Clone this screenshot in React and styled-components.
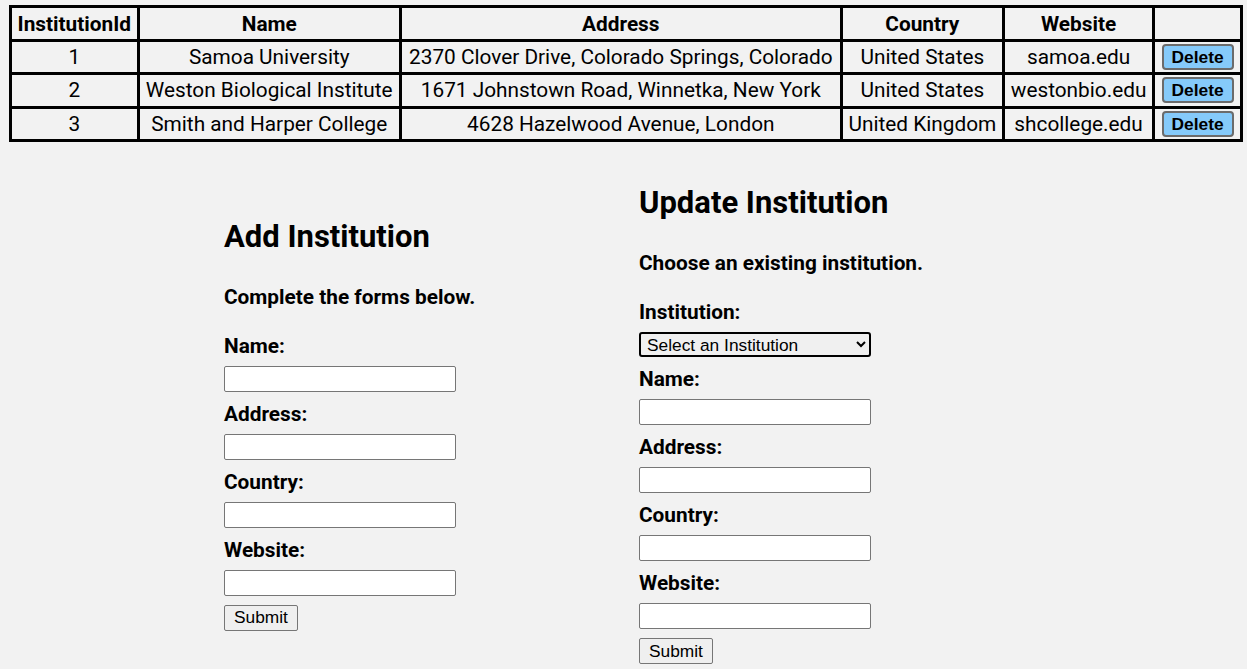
import React from "react";
import styled, { createGlobalStyle } from "styled-components";

const GlobalStyle = createGlobalStyle`
  html, body { background: #f2f2f2; }
  body {
    margin: 0;
    font-family: Roboto, "Liberation Sans", sans-serif;
    font-size: 20px;
    color: #000;
  }
`;

const Page = styled.div`
  padding: 5px 4px 5px 9px;
`;

const Table = styled.table`
  width: 100%;
  border-collapse: separate;
  border-spacing: 0;
  border-right: 3px solid #000;
  border-bottom: 3px solid #000;
`;

const Th = styled.th`
  border-left: 3px solid #000;
  border-top: 3px solid #000;
  padding: 5px 5px 2.5px;
  font-weight: 700;
  font-size: 20.8px;
  line-height: 23px;
  text-align: center;
  white-space: nowrap;
`;

const Td = styled.td`
  border-left: 3px solid #000;
  border-top: 3px solid #000;
  padding: ${(p) => (p.$tight ? "2px 6px" : "4px 5px 3.5px")};
  font-size: 20.8px;
  line-height: 23px;
  text-align: center;
  vertical-align: middle;
  white-space: nowrap;
`;

const DeleteButton = styled.button`
  box-sizing: border-box;
  display: block;
  margin: 0 auto;
  font-family: "Liberation Sans", Arial, sans-serif;
  font-weight: 700;
  font-size: 17.33px;
  line-height: 18px;
  height: 26px;
  padding: 2px 8px;
  background: #85cafa;
  border: 2px solid #6b6b6b;
  border-radius: 4px;
  color: #000;
  cursor: pointer;
`;

const Forms = styled.div`
  display: grid;
  grid-template-columns: 415px auto;
  align-items: center;
  padding: 43px 0 0 215px;
`;

const FormColumn = styled.div`
  display: flex;
  flex-direction: column;
  align-items: flex-start;
`;

const Title = styled.h2`
  margin: 0 0 30px;
  font-size: 31px;
  line-height: 36px;
  font-weight: 700;
`;

const Subtitle = styled.h4`
  margin: 0 0 25px;
  font-size: 20.8px;
  line-height: 24px;
  font-weight: 700;
`;

const Label = styled.label`
  display: block;
  font-size: 20.8px;
  line-height: 24px;
  font-weight: 700;
  margin-bottom: 8px;
`;

const TextInput = styled.input`
  box-sizing: border-box;
  width: 232px;
  height: 26px;
  margin: 0 0 10px;
  background: #fff;
  border: 1px solid #767676;
  border-radius: 2px;
  font-family: "Liberation Sans", Arial, sans-serif;
  font-size: 17.33px;
  padding: 1px 3px;
`;

const Select = styled.select`
  box-sizing: border-box;
  width: 232px;
  height: 25px;
  margin: 0 0 10px;
  background: #f0f0f0;
  border: 2px solid #000;
  border-radius: 3px;
  font-family: "Liberation Sans", Arial, sans-serif;
  font-size: 17.33px;
  color: #000;
  padding: 0 2px;
`;

const SubmitButton = styled.button`
  box-sizing: border-box;
  height: 26px;
  margin-top: -1px;
  padding: 1px 9px;
  background: #efefef;
  border: 1px solid #767676;
  border-radius: 2px;
  font-family: "Liberation Sans", Arial, sans-serif;
  font-size: 17.33px;
  color: #000;
`;

const rows = [
  { id: 1, name: "Samoa University", address: "2370 Clover Drive, Colorado Springs, Colorado", country: "United States", website: "samoa.edu" },
  { id: 2, name: "Weston Biological Institute", address: "1671 Johnstown Road, Winnetka, New York", country: "United States", website: "westonbio.edu" },
  { id: 3, name: "Smith and Harper College", address: "4628 Hazelwood Avenue, London", country: "United Kingdom", website: "shcollege.edu" },
];

const fields = ["Name", "Address", "Country", "Website"];

export default function App() {
  return (
    <Page>
      <GlobalStyle />
      <Table>
        <thead>
          <tr>
            <Th>InstitutionId</Th>
            <Th>Name</Th>
            <Th>Address</Th>
            <Th>Country</Th>
            <Th>Website</Th>
            <Th></Th>
          </tr>
        </thead>
        <tbody>
          {rows.map((r) => (
            <tr key={r.id}>
              <Td>{r.id}</Td>
              <Td>{r.name}</Td>
              <Td>{r.address}</Td>
              <Td>{r.country}</Td>
              <Td>{r.website}</Td>
              <Td $tight><DeleteButton>Delete</DeleteButton></Td>
            </tr>
          ))}
        </tbody>
      </Table>
      <Forms>
        <FormColumn>
          <Title>Add Institution</Title>
          <Subtitle>Complete the forms below.</Subtitle>
          {fields.map((f) => (
            <React.Fragment key={f}>
              <Label>{f}:</Label>
              <TextInput type="text" />
            </React.Fragment>
          ))}
          <SubmitButton>Submit</SubmitButton>
        </FormColumn>
        <FormColumn>
          <Title>Update Institution</Title>
          <Subtitle>Choose an existing institution.</Subtitle>
          <Label>Institution:</Label>
          <Select defaultValue="">
            <option value="">Select an Institution</option>
            {rows.map((r) => (
              <option key={r.id} value={r.id}>{r.name}</option>
            ))}
          </Select>
          {fields.map((f) => (
            <React.Fragment key={f}>
              <Label>{f}:</Label>
              <TextInput type="text" />
            </React.Fragment>
          ))}
          <SubmitButton>Submit</SubmitButton>
        </FormColumn>
      </Forms>
    </Page>
  );
}
